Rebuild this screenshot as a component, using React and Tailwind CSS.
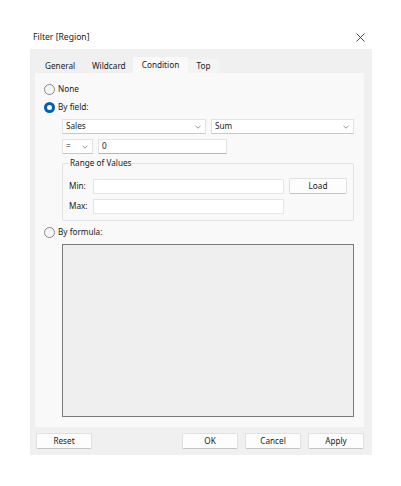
import React from "react";

function Radio({ checked }) {
  return checked ? (
    <span className="w-[11px] h-[11px] rounded-full bg-[#005fb8] flex items-center justify-center shrink-0">
      <span className="w-[5px] h-[5px] rounded-full bg-white" />
    </span>
  ) : (
    <span className="w-[11px] h-[11px] rounded-full border border-[#8a8a8a] bg-[#f6f6f6] shrink-0" />
  );
}

function Chevron() {
  return (
    <svg width="6" height="4" viewBox="0 0 6 4" className="shrink-0">
      <path d="M0.5 0.8 L3 3.2 L5.5 0.8" fill="none" stroke="#777" strokeWidth="0.8" />
    </svg>
  );
}

function Select({ value, className }) {
  return (
    <div
      className={
        "h-[15px] bg-white border border-[#e3e3e3] border-b-[#c8c8c8] flex items-center justify-between pl-[3px] pr-[4px] " +
        className
      }
    >
      <span>{value}</span>
      <Chevron />
    </div>
  );
}

function Input({ value, className }) {
  return (
    <div
      className={
        "h-[15px] bg-white border border-[#e5e5e5] border-b-[#b5b5b5] flex items-center pl-[3px] " +
        className
      }
    >
      {value}
    </div>
  );
}

function Button({ children, className }) {
  return (
    <div
      className={
        "h-[16px] bg-[#fdfdfd] border border-[#e0e0e0] border-b-[#c4c4c4] rounded-[2px] flex items-center justify-center " +
        className
      }
    >
      {children}
    </div>
  );
}

export default function App() {
  return (
    <div
      className="w-[401px] h-[486px] bg-white text-[8.2px] text-[#1a1a1a] flex flex-col"
      style={{ fontFamily: '"Noto Sans", "Segoe UI", sans-serif' }}
    >
      <div className="h-[49px] flex items-end justify-between pl-[33px] pr-[36px] pb-[5px]">
        <span className="text-[8.6px]">Filter [Region]</span>
        <svg width="9" height="9" viewBox="0 0 9 9" className="mb-[2px]">
          <path d="M0.5 0.5 L8.5 8.5 M8.5 0.5 L0.5 8.5" stroke="#333" strokeWidth="0.9" />
        </svg>
      </div>

      <div className="ml-[30px] w-[342px] h-[406px] bg-[#f0f0f0] flex flex-col px-[5px] pt-[8px]">
        {/* tabs */}
        <div className="flex items-end h-[16px]">
          <div className="w-[10px]" />
          <div className="h-[14px] w-[47px] flex items-center">General</div>
          <div className="h-[14px] w-[41px] flex items-center">Wildcard</div>
          <div className="h-[16px] w-[55px] bg-[#f9f9f9] flex items-center justify-center">Condition</div>
          <div className="h-[14px] w-[31px] bg-[#f4f4f4] flex items-center justify-center">Top</div>
        </div>

        {/* content */}
        <div className="w-[329px] h-[354px] bg-[#f9f9f9] flex flex-col pl-[9px] pt-[11px]">
          <div className="flex items-center gap-[3px] h-[11px]">
            <Radio />
            <span>None</span>
          </div>
          <div className="flex items-center gap-[3px] h-[11px] mt-[7px]">
            <Radio checked />
            <span>By field:</span>
          </div>

          <div className="flex flex-col ml-[18px] w-[292px]">
            <div className="flex gap-[5px] mt-[6px]">
              <Select value="Sales" className="w-[144px]" />
              <Select value="Sum" className="w-[143px]" />
            </div>
            <div className="flex gap-[5px] mt-[5px]">
              <Select value="=" className="w-[31px]" />
              <Input value="0" className="w-[129px]" />
            </div>

            <div className="relative mt-[9px] h-[58px] border border-[#e2e2e2] rounded-[2px] flex flex-col pl-[6px] pt-[10px]">
              <span className="absolute -top-[7px] left-[6px] bg-[#f9f9f9] px-[1px]">Range of Values</span>
              <div className="flex items-center mt-[4px]">
                <span className="w-[24px]">Min:</span>
                <Input value="" className="w-[191px] border-b-[#e5e5e5]" />
                <Button className="ml-[5px] w-[58px]">Load</Button>
              </div>
              <div className="flex items-center mt-[5px]">
                <span className="w-[24px]">Max:</span>
                <Input value="" className="w-[191px] border-b-[#e5e5e5]" />
              </div>
            </div>
          </div>

          <div className="flex items-center gap-[3px] h-[11px] mt-[6px]">
            <Radio />
            <span>By formula:</span>
          </div>
          <div className="ml-[18px] mt-[6px] w-[292px] h-[173px] bg-[#efefef] border border-[#7a7a7a]" />
        </div>

        {/* buttons */}
        <div className="flex items-center mt-[6px] pr-[3px]">
          <Button className="w-[56px] ml-[1px]">Reset</Button>
          <div className="flex-1" />
          <Button className="w-[56px] border-b-[#005fb8]">OK</Button>
          <Button className="w-[56px] ml-[7px]">Cancel</Button>
          <Button className="w-[56px] ml-[7px]">Apply</Button>
        </div>
      </div>
    </div>
  );
}
